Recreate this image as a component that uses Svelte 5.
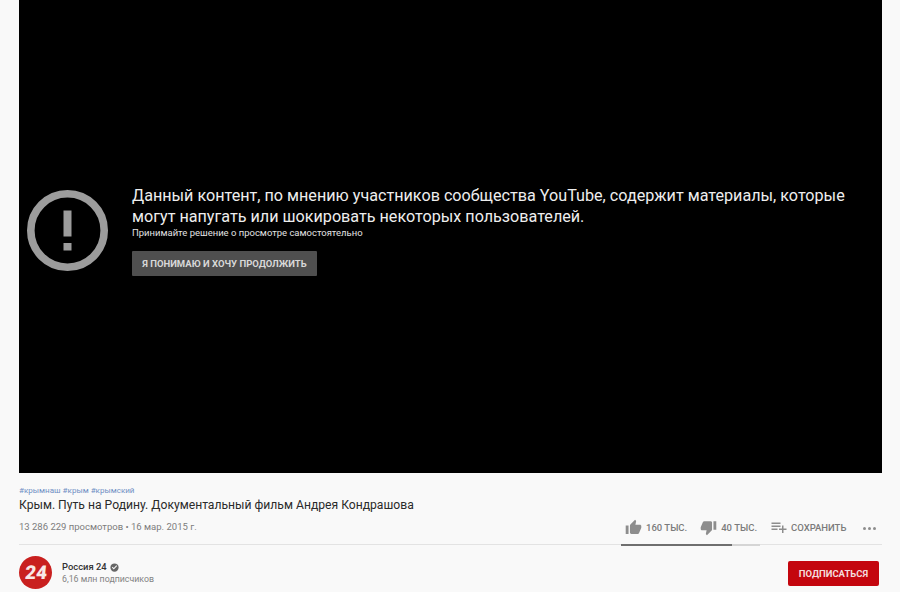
<script>
  const tags = ['#крымнаш', '#крым', '#крымский'];
</script>

<div class="page">
  <section class="player">
    <svg class="warn" viewBox="0 0 81 81" aria-hidden="true">
      <circle cx="40.5" cy="40.5" r="36.7" fill="none" stroke="#9c9c9c" stroke-width="7.6" />
      <rect x="36.5" y="20.5" width="8" height="26" fill="#9c9c9c" />
      <rect x="36.5" y="53" width="8" height="7.5" fill="#9c9c9c" />
    </svg>
    <div class="message">
      <h2>Данный контент, по мнению участников сообщества YouTube, содержит материалы, которые могут напугать или шокировать некоторых пользователей.</h2>
      <p>Принимайте решение о просмотре самостоятельно</p>
      <button class="proceed">Я ПОНИМАЮ И ХОЧУ ПРОДОЛЖИТЬ</button>
    </div>
  </section>

  <section class="info">
    <div class="tags">
      {#each tags as tag}<span>{tag}</span>{/each}
    </div>
    <h1>Крым. Путь на Родину. Документальный фильм Андрея Кондрашова</h1>
    <div class="meta">
      <span class="views">13 286 229 просмотров • 16 мар. 2015 г.</span>
      <div class="actions">
        <div class="sentiment">
          <div class="votes">
            <span class="act like">
              <svg viewBox="0 0 24 24" width="17" height="17"><path fill="#8d8d8d" d="M1 21h4V9H1v12zm22-11c0-1.1-.9-2-2-2h-6.31l.95-4.57.03-.32c0-.41-.17-.79-.44-1.06L14.17 1 7.59 7.59C7.22 7.95 7 8.45 7 9v10c0 1.1.9 2 2 2h9c.83 0 1.54-.5 1.84-1.22l3.02-7.05c.09-.23.14-.47.14-.73v-2z"/></svg>
              160 ТЫС.
            </span>
            <span class="act dislike">
              <svg viewBox="0 0 24 24" width="17" height="17"><path fill="#8d8d8d" d="M15 3H6c-.83 0-1.54.5-1.84 1.22l-3.02 7.05c-.09.23-.14.47-.14.73v2c0 1.1.9 2 2 2h6.31l-.95 4.57-.03.32c0 .41.17.79.44 1.06L9.83 23l6.59-6.59c.36-.36.58-.86.58-1.41V5c0-1.1-.9-2-2-2zm4 0v12h4V3h-4z"/></svg>
              40 ТЫС.
            </span>
          </div>
          <div class="bar"><div class="fill" style="width: 80%"></div></div>
        </div>
        <span class="act save">
          <svg viewBox="0 0 24 24" width="18" height="18"><path fill="#8d8d8d" d="M14 10H2v2h12v-2zm0-4H2v2h12V6zm4 8v-4h-2v4h-4v2h4v4h2v-4h4v-2h-4zM2 16h8v-2H2v2z"/></svg>
          СОХРАНИТЬ
        </span>
        <span class="more"><i></i><i></i><i></i></span>
      </div>
    </div>
  </section>

  <section class="channel">
    <svg class="logo" viewBox="0 0 33 33" aria-hidden="true">
      <circle cx="16.5" cy="16.5" r="16.5" fill="#c9201f" />
      <text x="17" y="23" text-anchor="middle" class="logo-text" transform="skewX(-6) translate(2 0)">24</text>
    </svg>
    <div class="owner">
      <div class="name">
        Россия 24
        <svg viewBox="0 0 24 24" width="9" height="9"><path fill="#666" d="M12 1a11 11 0 1 0 0 22 11 11 0 0 0 0-22zm-2 16-5-5 2-2 3 3 7-7 2 2-9 9z"/></svg>
      </div>
      <div class="subs">6,16 млн подписчиков</div>
    </div>
    <button class="subscribe">ПОДПИСАТЬСЯ</button>
  </section>
</div>

<style>
  :global(body) {
    margin: 0;
    background: #f9f9f9;
  }
  .page {
    width: 900px;
    height: 592px;
    overflow: hidden;
    box-sizing: border-box;
    padding: 0 18px 0 19px;
    font-family: Roboto, "Liberation Sans", sans-serif;
    background: #f9f9f9;
  }
  .player {
    height: 473px;
    background: #000;
    display: flex;
    align-items: flex-start;
    padding: 185px 20px 0 8px;
    box-sizing: border-box;
    gap: 24px;
  }
  .warn {
    width: 81px;
    height: 81px;
    margin-top: 5px;
    flex: none;
  }
  .message {
    flex: 1;
    color: #eee;
  }
  h2 {
    margin: 0;
    font-size: 16.16px;
    line-height: 21px;
    font-weight: 400;
  }
  p {
    margin: 0;
    font-size: 9.47px;
    line-height: 12px;
    color: #e2e2e2;
  }
  .proceed {
    display: block;
    margin-top: 12px;
    width: 185px;
    height: 25px;
    border: 0;
    padding: 0;
    border-radius: 1px;
    background: #4f4f4f;
    color: #d8d8d8;
    font: 700 9.5px Roboto, sans-serif;
  }
  .info {
    padding-top: 13px;
    height: 72px;
    box-sizing: border-box;
    border-bottom: 1px solid #e3e3e3;
  }
  .tags {
    display: flex;
    gap: 2px;
    font-size: 8.05px;
    line-height: 10px;
    color: #6f8fc4;
  }
  h1 {
    margin: 1px 0 0;
    font-size: 12.15px;
    line-height: 16px;
    font-weight: 400;
    color: #2a2a2a;
  }
  .meta {
    display: flex;
    justify-content: space-between;
    margin-top: 7px;
  }
  .views {
    font-size: 9.5px;
    line-height: 14px;
    color: #7d7d7d;
  }
  .actions {
    display: flex;
    align-items: flex-start;
    margin-top: 3px;
    height: 27px;
  }
  .sentiment {
    width: 139px;
    margin-right: 10px;
    position: relative;
    top: -3px;
  }
  .votes {
    display: flex;
    gap: 13px;
    padding-left: 4px;
    height: 24px;
    align-items: flex-start;
  }
  .act {
    display: flex;
    align-items: center;
    gap: 4px;
    font-size: 9.5px;
    font-weight: 500;
    color: #7b7b7b;
    height: 14px;
    white-space: nowrap;
  }
  .bar {
    height: 2px;
    background: #d5d5d5;
  }
  .fill {
    height: 2px;
    background: #6f6f6f;
  }
  .save {
    position: relative;
    top: -3px;
    gap: 3px;
    width: 93px;
  }
  .more {
    display: flex;
    gap: 2px;
    height: 10px;
    align-items: center;
    margin-right: 6px;
  }
  .more i {
    width: 3px;
    height: 3px;
    border-radius: 50%;
    background: #8d8d8d;
  }
  .channel {
    display: flex;
    align-items: flex-start;
    padding-top: 11px;
  }
  .logo {
    width: 33px;
    height: 33px;
    flex: none;
  }
  .logo-text {
    font: 900 19px Roboto, sans-serif;
    fill: #f8e8e6;
  }
  .owner {
    margin-left: 10px;
    flex: 1;
  }
  .name {
    display: flex;
    align-items: center;
    gap: 3px;
    font-size: 9.4px;
    font-weight: 500;
    line-height: 12px;
    color: #333;
    margin-top: 5px;
  }
  .subs {
    font-size: 8.8px;
    line-height: 12px;
    color: #838383;
  }
  .subscribe {
    width: 91px;
    height: 25px;
    margin: 5px 3px 0 0;
    border: 0;
    padding: 0;
    border-radius: 2px;
    background: #c4060e;
    color: #f3dcdc;
    font: 700 9.5px Roboto, sans-serif;
  }
</style>
